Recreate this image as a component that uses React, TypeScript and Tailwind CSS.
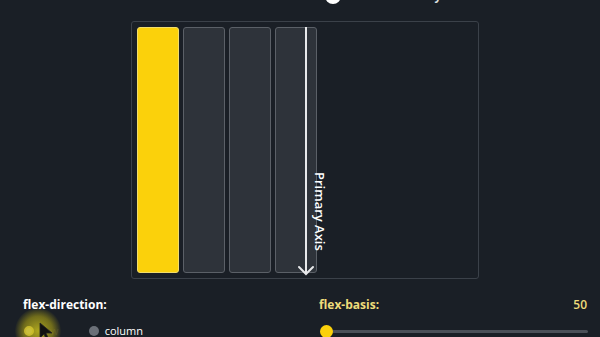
import React from "react";

const Item = ({ active }: { active?: boolean }) => (
  <div
    className={
      active
        ? "w-[42px] h-full rounded-[3px] bg-[#fbd10b] border border-[#f3dd6a]"
        : "w-[42px] h-full rounded-[3px] bg-[#2e333a] border border-[#5b6067]"
    }
  />
);

export default function App() {
  return (
    <div
      className="w-[600px] h-[337px] bg-[#1a1f26] overflow-hidden relative text-white"
      style={{ fontFamily: "'Open Sans', 'Noto Sans', sans-serif" }}
    >
      {/* toggle row, mostly scrolled off */}
      <div className="flex items-center h-[20px] mt-[-14px] pl-[325px] gap-[17px]">
        <div className="w-[16px] h-[16px] rounded-full bg-white" />
        <span className="text-[12px] font-bold text-[#d8dadd]">Show Primary Axis</span>
      </div>

      {/* flex container */}
      <div className="relative ml-[131px] mt-[15px] w-[348px] h-[258px] border border-[#3b4149] rounded-[3px] p-[5px] flex gap-[4px]">
        <Item active />
        <Item />
        <Item />
        <Item />

        <div className="absolute left-[173px] top-[5px] h-[247px] w-[2px] bg-[#e8e9eb]" />
        <svg
          className="absolute left-[165px] top-[243px]"
          width="18"
          height="12"
          viewBox="0 0 18 12"
          fill="none"
        >
          <path d="M2 2 L9 9 L16 2" stroke="#e8e9eb" strokeWidth="2" strokeLinecap="round" />
        </svg>
        <span
          className="absolute left-[181px] top-[150px] text-[13px] font-semibold text-white leading-none"
          style={{ writingMode: "vertical-rl" }}
        >
          Primary Axis
        </span>
      </div>

      {/* controls */}
      <div className="flex mt-[18px] px-[23px]">
        <div className="w-[296px] shrink-0 flex flex-col">
          <span className="text-[12px] font-bold text-white leading-[16px]">flex-direction:</span>
          <div className="flex items-center mt-[10px] text-[11px]">
            <span className="w-[10px] h-[10px] rounded-full border-2 border-[#e9d45a] bg-[#f4e68c] ml-[1px]" />
            <span className="ml-[5px] text-[#333]">row</span>
            <span className="w-[10px] h-[10px] rounded-full bg-[#6b7078] ml-[30px]" />
            <span className="ml-[6px] text-white">column</span>
          </div>
        </div>
        <div className="flex-1 min-w-0 flex flex-col">
          <div className="flex justify-between leading-[16px] mr-[-10px]">
            <span className="text-[12px] font-bold text-[#eedc7a]">flex-basis:</span>
            <span className="text-[12px] font-semibold text-[#eedc7a]">50</span>
          </div>
          <div className="relative mt-[12px] h-[12px] flex items-center">
            <div className="w-[268px] shrink-0 h-[3px] rounded-full bg-[#4b5058] ml-[1px]" />
            <div className="absolute left-[1px] w-[13px] h-[13px] rounded-full bg-[#fbd10b]" />
          </div>
        </div>
      </div>

      {/* cursor highlight */}
      <div
        className="absolute left-[15px] top-[308px] w-[46px] h-[46px] rounded-full pointer-events-none"
        style={{
          background:
            "radial-gradient(circle, rgba(200,190,30,0.85) 0%, rgba(170,160,20,0.6) 45%, rgba(120,110,20,0) 72%)",
        }}
      />
      <svg className="absolute left-[39px] top-[322px]" width="16" height="20" viewBox="0 0 16 20">
        <path d="M1 1 L1 16 L5 12 L8 19 L10 18 L7 11 L13 11 Z" fill="#111" stroke="#222" strokeWidth="0.8" />
      </svg>
    </div>
  );
}
